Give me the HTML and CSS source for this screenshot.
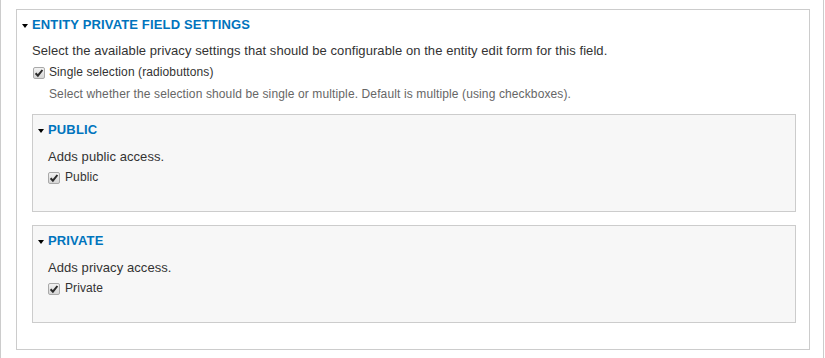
FILE: index.html
```html
<!DOCTYPE html>
<html>
<head>
<meta charset="utf-8">
<link rel="stylesheet" href="styles.css">
</head>
<body>
<div class="page">
  <div class="fieldset outer">
    <div class="legend"><span class="arrow"></span>Entity private field settings</div>
    <div class="desc">Select the available privacy settings that should be configurable on the entity edit form for this field.</div>
    <div class="check-row">
      <span class="cbox"><svg viewBox="0 0 12 12" width="12" height="12"><path d="M2.6 6.2 L4.9 8.7 L9.4 3" fill="none" stroke="#2b2b2b" stroke-width="2"/></svg></span>
      <span class="check-label">Single selection (radiobuttons)</span>
    </div>
    <div class="help">Select whether the selection should be single or multiple. Default is multiple (using checkboxes).</div>

    <div class="fieldset inner">
      <div class="legend"><span class="arrow"></span>Public</div>
      <div class="desc">Adds public access.</div>
      <div class="check-row">
        <span class="cbox"><svg viewBox="0 0 12 12" width="12" height="12"><path d="M2.6 6.2 L4.9 8.7 L9.4 3" fill="none" stroke="#2b2b2b" stroke-width="2"/></svg></span>
        <span class="check-label">Public</span>
      </div>
    </div>

    <div class="fieldset inner">
      <div class="legend"><span class="arrow"></span>Private</div>
      <div class="desc">Adds privacy access.</div>
      <div class="check-row">
        <span class="cbox"><svg viewBox="0 0 12 12" width="12" height="12"><path d="M2.6 6.2 L4.9 8.7 L9.4 3" fill="none" stroke="#2b2b2b" stroke-width="2"/></svg></span>
        <span class="check-label">Private</span>
      </div>
    </div>
  </div>
</div>
</body>
</html>
```

FILE: styles.css
```css
html, body {
  margin: 0;
  padding: 0;
  background: #fff;
}
body {
  font-family: "Liberation Sans", Arial, sans-serif;
  font-size: 13px;
  color: #333;
}
.page {
  box-sizing: border-box;
  width: 824px;
  height: 358px;
  border-left: 1px solid #ccc;
  border-right: 1px solid #ccc;
  padding-top: 9px;
}
.fieldset {
  box-sizing: border-box;
  border: 1px solid #ccc;
}
.outer {
  width: 794px;
  margin-left: 15px;
  padding: 6px 13px 26px 15px;
  background: #fff;
}
.inner {
  background: #f7f7f7;
  padding: 6px 15px 25px 15px;
  margin-top: 13px;
}
.help + .inner {
  margin-top: 11px;
}
.legend {
  position: relative;
  margin-left: -15px;
  padding-left: 15px;
  line-height: 18px;
  font-weight: bold;
  letter-spacing: 0.15px;
  text-transform: uppercase;
  color: #0074bd;
}
.arrow {
  position: absolute;
  left: 5px;
  top: 8px;
  width: 0;
  height: 0;
  border-left: 3.5px solid transparent;
  border-right: 3.5px solid transparent;
  border-top: 4px solid #000;
}
.desc {
  line-height: 18px;
  letter-spacing: 0.07px;
  margin-top: 8px;
}
.inner .desc {
  margin-top: 9px;
}
.check-row {
  display: flex;
  align-items: center;
  line-height: 18px;
  margin-top: 3px;
}
.inner .check-row {
  margin-top: 2px;
}
.cbox {
  box-sizing: border-box;
  display: inline-flex;
  align-items: center;
  justify-content: center;
  width: 12px;
  height: 12px;
  margin-left: 1px;
  margin-top: 1px;
  border: 1px solid #a9a9a9;
  border-radius: 2px;
  background: linear-gradient(#f2f2f2, #d6d6d6);
}
.inner .cbox {
  margin-left: 0;
}
.cbox svg {
  display: block;
  flex: none;
}
.check-label {
  font-size: 12px;
  letter-spacing: 0.1px;
  margin-left: 4px;
}
.inner .check-label {
  margin-left: 5px;
}
.help {
  font-size: 12px;
  line-height: 18px;
  letter-spacing: 0.12px;
  color: #666;
  margin-top: 4px;
  padding-left: 17px;
}
```
